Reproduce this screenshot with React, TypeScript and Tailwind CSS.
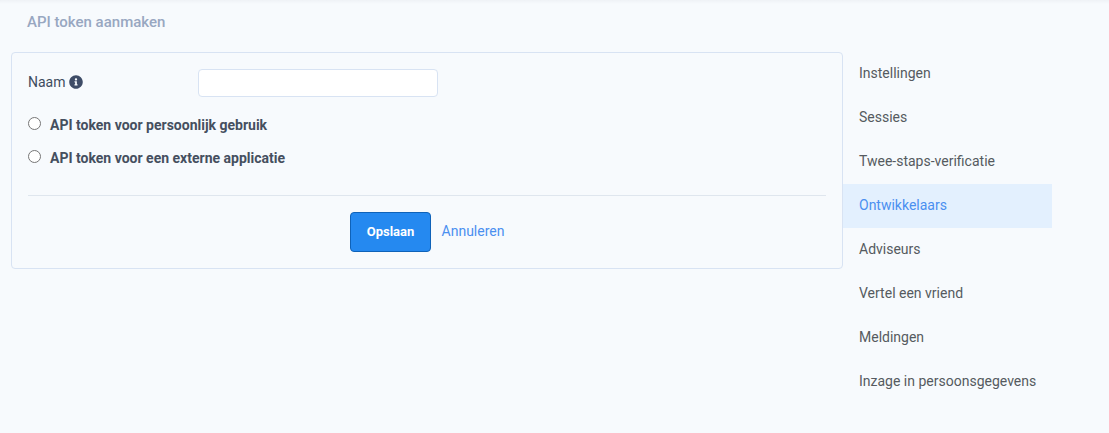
export default function App() {
  const items = ["Instellingen", "Sessies", "Twee-staps-verificatie", "Ontwikkelaars", "Adviseurs", "Vertel een vriend", "Meldingen", "Inzage in persoonsgegevens"];
  return (
    <div className="h-[433px] w-[1109px] overflow-hidden bg-[#f7fafd] font-['Roboto',sans-serif] text-[14px] text-[#3e4c5e]">
      <div className="h-[4px] bg-gradient-to-b from-[#eff2f6] to-[#f7fafd]" />
      <div className="pl-[27px] pt-[10px] h-[48px] text-[15px] leading-[16px] font-medium text-[#98a7c1]">API token aanmaken</div>
      <div className="flex items-start pl-[11px]">
        <div className="w-[832px] h-[217px] rounded-[4px] border border-[#d8e3f3] px-[16px] pt-[16px] flex flex-col">
          <div className="flex items-center h-[28px]">
            <div className="w-[170px] flex items-center gap-[3px]">
              <span className="pb-[2px]">Naam</span>
              <svg width="14" height="14" viewBox="0 0 512 512" fill="#3e4c67" className="mb-[2px]"><path d="M256 8C119 8 8 119 8 256s111 248 248 248 248-111 248-248S393 8 256 8zm0 110c23 0 42 19 42 42s-19 42-42 42-42-19-42-42 19-42 42-42zm56 254c0 7-5 12-12 12h-88c-7 0-12-5-12-12v-24c0-7 5-12 12-12h12v-64h-12c-7 0-12-5-12-12v-24c0-7 5-12 12-12h64c7 0 12 5 12 12v100h12c7 0 12 5 12 12v24z"/></svg>
            </div>
            <div className="w-[240px] h-[28px] rounded-[4px] border border-[#d8e3f3] bg-white" />
          </div>
          <label className="flex items-center mt-[18px] h-[20px] font-bold text-[#454f5f]">
            <span className="w-[13px] h-[13px] rounded-full border border-[#767676] bg-white mr-[9px] mb-[3px]" />
            API token voor persoonlijk gebruik
          </label>
          <label className="flex items-center mt-[13px] h-[20px] font-bold text-[#454f5f]">
            <span className="w-[13px] h-[13px] rounded-full border border-[#767676] bg-white mr-[9px] mb-[3px]" />
            API token voor een externe applicatie
          </label>
          <div className="mt-[27px] border-t border-[#dfe6ee]" />
          <div className="flex items-center justify-center gap-[11px] mt-[16px]">
            <button className="w-[81px] h-[40px] pl-[1px] rounded-[4px] border border-[#0f62b8] bg-[#2589f0] text-white font-bold text-[13px]">Opslaan</button>
            <a className="text-[#4a8ff0] pb-[1px]">Annuleren</a>
          </div>
        </div>
        <nav className="w-[209px] flex flex-col">
          {items.map((t) => (
            <div key={t} className={`h-[44px] pl-[16px] pb-[2px] flex items-center ${t === "Ontwikkelaars" ? "bg-[#e3f0fe] text-[#4a8ff0]" : "text-[#555a60]"}`}>{t}</div>
          ))}
        </nav>
      </div>
    </div>
  );
}
